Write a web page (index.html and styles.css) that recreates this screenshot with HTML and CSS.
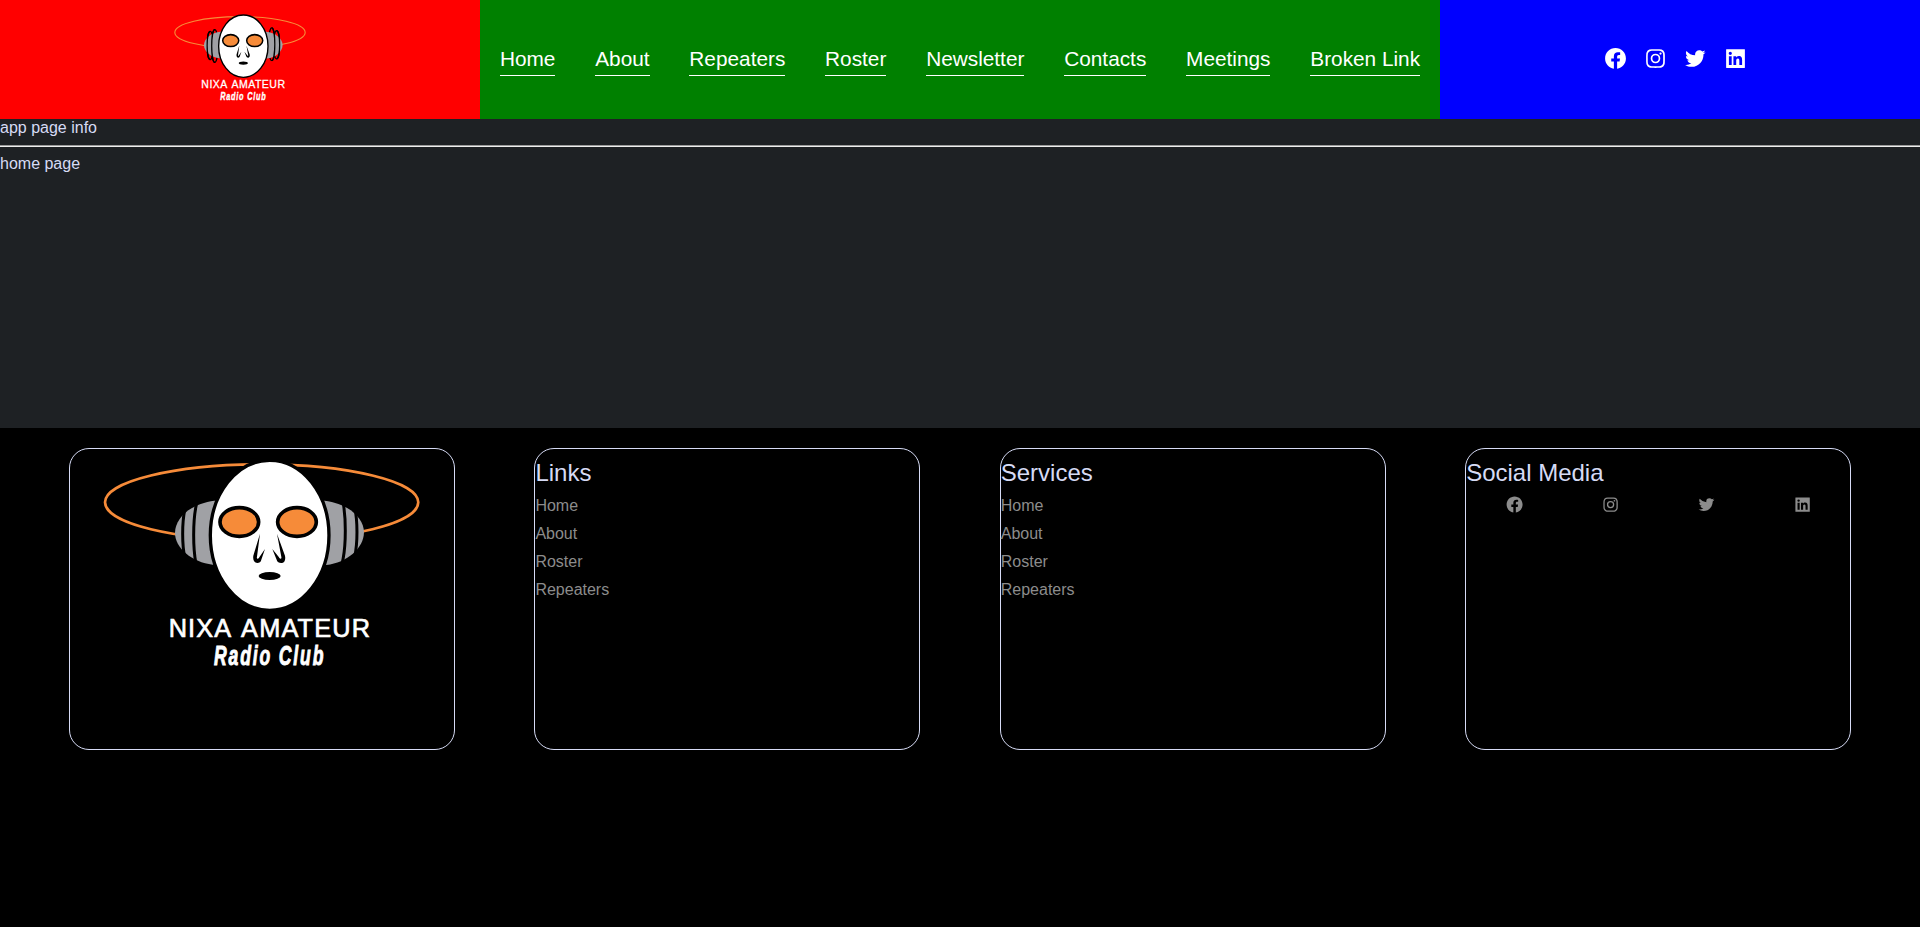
FILE: index.html
```html
<!DOCTYPE html>
<html lang="en">
<head>
<meta charset="utf-8">
<title>Nixa Amateur Radio Club</title>
<link rel="stylesheet" href="styles.css">
</head>
<body>
<svg class="sprite" aria-hidden="true">
  <symbol id="logo" viewBox="128 109 952 640">
    <ellipse cx="604" cy="248" rx="470" ry="114" fill="none" stroke="#f68b39" stroke-width="8"/>
    <g fill="none" stroke="#000" stroke-width="8">
      <ellipse cx="389" cy="342" rx="22" ry="102"/>
      <ellipse cx="422" cy="346" rx="22" ry="118"/>
      <ellipse cx="868" cy="337" rx="22" ry="102"/>
      <ellipse cx="833" cy="333" rx="22" ry="118"/>
    </g>
    <path d="M628 243H462C400 250 344 290 344 340C344 385 395 428 457 435H628Z" fill="#a0a1a5"/>
    <path d="M628 243H793C856 250 911 290 911 338C911 385 860 430 798 436H628Z" fill="#a0a1a5"/>
    <g fill="none" stroke="#000" stroke-width="9">
      <path d="M389 240A22 102 0 0 0 389 444"/>
      <path d="M422 228A22 118 0 0 0 422 464"/>
      <path d="M868 235A22 102 0 0 1 868 439"/>
      <path d="M833 215A22 118 0 0 1 833 451"/>
    </g>
    <ellipse cx="628" cy="347" rx="178" ry="225" fill="#fff" stroke="#000" stroke-width="10"/>
    <g fill="#f68b39" stroke="#000" stroke-width="11">
      <ellipse cx="537" cy="307" rx="58" ry="43"/>
      <ellipse cx="710" cy="307" rx="58" ry="43"/>
    </g>
    <path d="M599 342L579 408C575 436 601 434 603 420L614 388L597 413C594 420 588 418 590 411Z"/>
    <path d="M650 342L674 408C680 436 652 434 649 420L636 388L656 413C659 420 665 418 663 411Z"/>
    <ellipse cx="628" cy="469" rx="33" ry="12"/>
  </symbol>
  <symbol id="facebook" viewBox="0 0 24 24"><path d="M12.001 2.002c-5.522 0-9.999 4.477-9.999 9.999 0 4.99 3.656 9.126 8.437 9.879v-6.988h-2.54v-2.891h2.54V9.798c0-2.508 1.493-3.891 3.776-3.891 1.094 0 2.24.195 2.24.195v2.459h-1.264c-1.24 0-1.628.772-1.628 1.563v1.875h2.771l-.443 2.891h-2.328v6.988C18.344 21.129 22 16.992 22 12.001c0-5.522-4.477-9.999-9.999-9.999z"/></symbol>
  <symbol id="instagram" viewBox="0 0 24 24"><path d="M11.999 7.377a4.623 4.623 0 1 0 0 9.248 4.623 4.623 0 0 0 0-9.248zm0 7.627a3.004 3.004 0 1 1 0-6.008 3.004 3.004 0 0 1 0 6.008z"/><circle cx="16.806" cy="7.207" r="1.078"/><path d="M20.533 6.111A4.605 4.605 0 0 0 17.9 3.479a6.606 6.606 0 0 0-2.186-.42c-.963-.042-1.268-.054-3.71-.054s-2.755 0-3.71.054a6.554 6.554 0 0 0-2.184.42 4.6 4.6 0 0 0-2.633 2.632 6.585 6.585 0 0 0-.419 2.186c-.043.962-.056 1.267-.056 3.71 0 2.442 0 2.753.056 3.71.015.748.156 1.486.419 2.187a4.61 4.61 0 0 0 2.634 2.632 6.584 6.584 0 0 0 2.185.45c.963.042 1.268.055 3.71.055s2.755 0 3.71-.055a6.615 6.615 0 0 0 2.186-.419 4.613 4.613 0 0 0 2.633-2.633c.263-.7.404-1.438.419-2.186.043-.962.056-1.267.056-3.71s0-2.753-.056-3.71a6.581 6.581 0 0 0-.421-2.217zm-1.218 9.532a5.043 5.043 0 0 1-.311 1.688 2.987 2.987 0 0 1-1.712 1.711 4.985 4.985 0 0 1-1.67.311c-.95.044-1.218.055-3.654.055-2.438 0-2.687 0-3.655-.055a4.96 4.96 0 0 1-1.669-.311 2.985 2.985 0 0 1-1.719-1.711 5.08 5.08 0 0 1-.311-1.669c-.043-.95-.053-1.218-.053-3.654 0-2.437 0-2.686.053-3.655a5.038 5.038 0 0 1 .311-1.687c.305-.789.93-1.41 1.719-1.712a5.01 5.01 0 0 1 1.669-.311c.951-.043 1.218-.055 3.655-.055s2.687 0 3.654.055a4.96 4.96 0 0 1 1.67.311 2.991 2.991 0 0 1 1.712 1.712 5.08 5.08 0 0 1 .311 1.669c.043.951.055 1.218.055 3.655 0 2.436 0 2.698-.043 3.654h-.011z"/></symbol>
  <symbol id="twitter" viewBox="0 0 24 24"><path d="M19.633 7.997c.013.175.013.349.013.523 0 5.325-4.053 11.461-11.46 11.461-2.282 0-4.402-.661-6.186-1.809.324.037.636.05.973.05a8.07 8.07 0 0 0 5.001-1.721 4.036 4.036 0 0 1-3.767-2.793c.249.037.499.062.761.062.361 0 .724-.05 1.061-.137a4.027 4.027 0 0 1-3.23-3.953v-.05c.537.299 1.16.486 1.82.511a4.022 4.022 0 0 1-1.796-3.354c0-.748.199-1.434.548-2.032a11.457 11.457 0 0 0 8.306 4.215c-.062-.3-.1-.611-.1-.923a4.026 4.026 0 0 1 4.028-4.028c1.16 0 2.207.486 2.943 1.272a7.957 7.957 0 0 0 2.556-.973 4.02 4.02 0 0 1-1.771 2.22 8.073 8.073 0 0 0 2.319-.624 8.645 8.645 0 0 1-2.019 2.083z"/></symbol>
  <symbol id="linkedin" viewBox="0 0 24 24"><path d="M20.7 3H3.3a.3.3 0 0 0-.3.3v17.4a.3.3 0 0 0 .3.3h17.4a.3.3 0 0 0 .3-.3V3.3a.3.3 0 0 0-.3-.3zM8.339 18.337H5.667v-8.59h2.672v8.59zM7.003 8.574a1.548 1.548 0 1 1 0-3.096 1.548 1.548 0 0 1 0 3.096zm11.335 9.763h-2.669V14.16c0-.996-.018-2.277-1.388-2.277-1.39 0-1.601 1.086-1.601 2.207v4.248h-2.667v-8.59h2.56v1.174h.037c.355-.675 1.227-1.387 2.524-1.387 2.704 0 3.203 1.778 3.203 4.092v4.71z"/></symbol>
</svg>
<header class="header">
  <a class="brand">
    <svg class="brand-logo" viewBox="128 109 952 640">
      <use href="#logo" x="128" y="109" width="952" height="640"/>
      <text class="logo-name" x="325" y="651" textLength="604">NIXA AMATEUR</text>
      <text class="logo-club" x="461" y="736" textLength="334" lengthAdjust="spacingAndGlyphs">Radio Club</text>
    </svg>
  </a>
  <nav class="nav">
    <a>Home</a><a>About</a><a>Repeaters</a><a>Roster</a><a>Newsletter</a><a>Contacts</a><a>Meetings</a><a>Broken Link</a>
  </nav>
  <div class="social">
    <svg class="social-icon"><use href="#facebook"/></svg>
    <svg class="social-icon"><use href="#instagram"/></svg>
    <svg class="social-icon"><use href="#twitter"/></svg>
    <svg class="social-icon"><use href="#linkedin"/></svg>
  </div>
</header>
<main class="main">
  <p>app page info</p>
  <div class="rule"></div>
  <p>home page</p>
</main>
<footer class="footer">
  <section class="card">
    <svg class="card-logo" viewBox="128 109 952 640">
      <use href="#logo" x="128" y="109" width="952" height="640"/>
      <text class="logo-name" x="325" y="651" textLength="604">NIXA AMATEUR</text>
      <text class="logo-club" x="461" y="736" textLength="334" lengthAdjust="spacingAndGlyphs">Radio Club</text>
    </svg>
  </section>
  <section class="card">
    <h2>Links</h2>
    <ul><li>Home</li><li>About</li><li>Roster</li><li>Repeaters</li></ul>
  </section>
  <section class="card">
    <h2>Services</h2>
    <ul><li>Home</li><li>About</li><li>Roster</li><li>Repeaters</li></ul>
  </section>
  <section class="card">
    <h2>Social Media</h2>
    <div class="card-social">
      <svg class="card-icon"><use href="#facebook"/></svg>
      <svg class="card-icon"><use href="#instagram"/></svg>
      <svg class="card-icon"><use href="#twitter"/></svg>
      <svg class="card-icon"><use href="#linkedin"/></svg>
    </div>
  </section>
</footer>
</body>
</html>
```

FILE: styles.css
```css
* { box-sizing: border-box; margin: 0; padding: 0; }
body {
  min-height: 100vh;
  display: flex;
  flex-direction: column;
  background: #000;
  color: #d6dbf5;
  font: 16px/18px "Liberation Sans", Arial, sans-serif;
}
.sprite { position: absolute; width: 0; height: 0; }
.logo-name {
  font: 76px "Liberation Sans", Arial, sans-serif;
  word-spacing: 10px;
  fill: #fff;
  stroke: #fff;
  stroke-width: 2px;
}
.logo-club {
  font: italic bold 85px "Liberation Sans", Arial, sans-serif;
  letter-spacing: 9px;
  fill: #fff;
  stroke: #fff;
  stroke-width: 3px;
}

.header { display: grid; grid-template-columns: 1fr 2fr 1fr; height: 119px; }
.brand { display: flex; justify-content: center; padding-top: 13px; background: red; }
.brand-logo { width: 132px; height: 89px; overflow: visible; }
.nav {
  display: flex;
  justify-content: center;
  align-items: center;
  gap: 39.8px;
  background: green;
  color: #fff;
  font-size: 20.8px;
  line-height: 24px;
  white-space: nowrap;
}
.nav a { padding: 4px 0; border-bottom: 1px solid #fff; }
.social {
  display: flex;
  justify-content: center;
  align-items: center;
  gap: 15px;
  padding: 0 10px 3px 0;
  background: blue;
}
.social-icon { width: 25px; height: 25px; fill: #fff; }

.main { height: 309px; background: #1e2124; }
.rule { height: 2px; margin: 8px 0; background: #eee; border-top: 1px solid #9a9a9a; }

.footer {
  display: grid;
  grid-template-columns: repeat(4, 1fr);
  gap: 79.5px;
  padding: 20px 69px 0;
}
.card { height: 302px; border: 1px solid #d6dbf5; border-radius: 20px; }
.card-logo { display: block; width: 317.3px; height: 213.3px; margin: 7.2px 0 0 33px; overflow: visible; }
.card h2 { margin-top: 10px; font-size: 24px; font-weight: 400; line-height: 28px; }
.card ul { list-style: none; margin-top: 5px; color: #8c8c8c; line-height: 28px; }
.card-social { display: flex; justify-content: space-around; margin: 8px 0 0 1px; }
.card-icon { width: 19.2px; height: 19.2px; fill: #8c8c8c; }
```
